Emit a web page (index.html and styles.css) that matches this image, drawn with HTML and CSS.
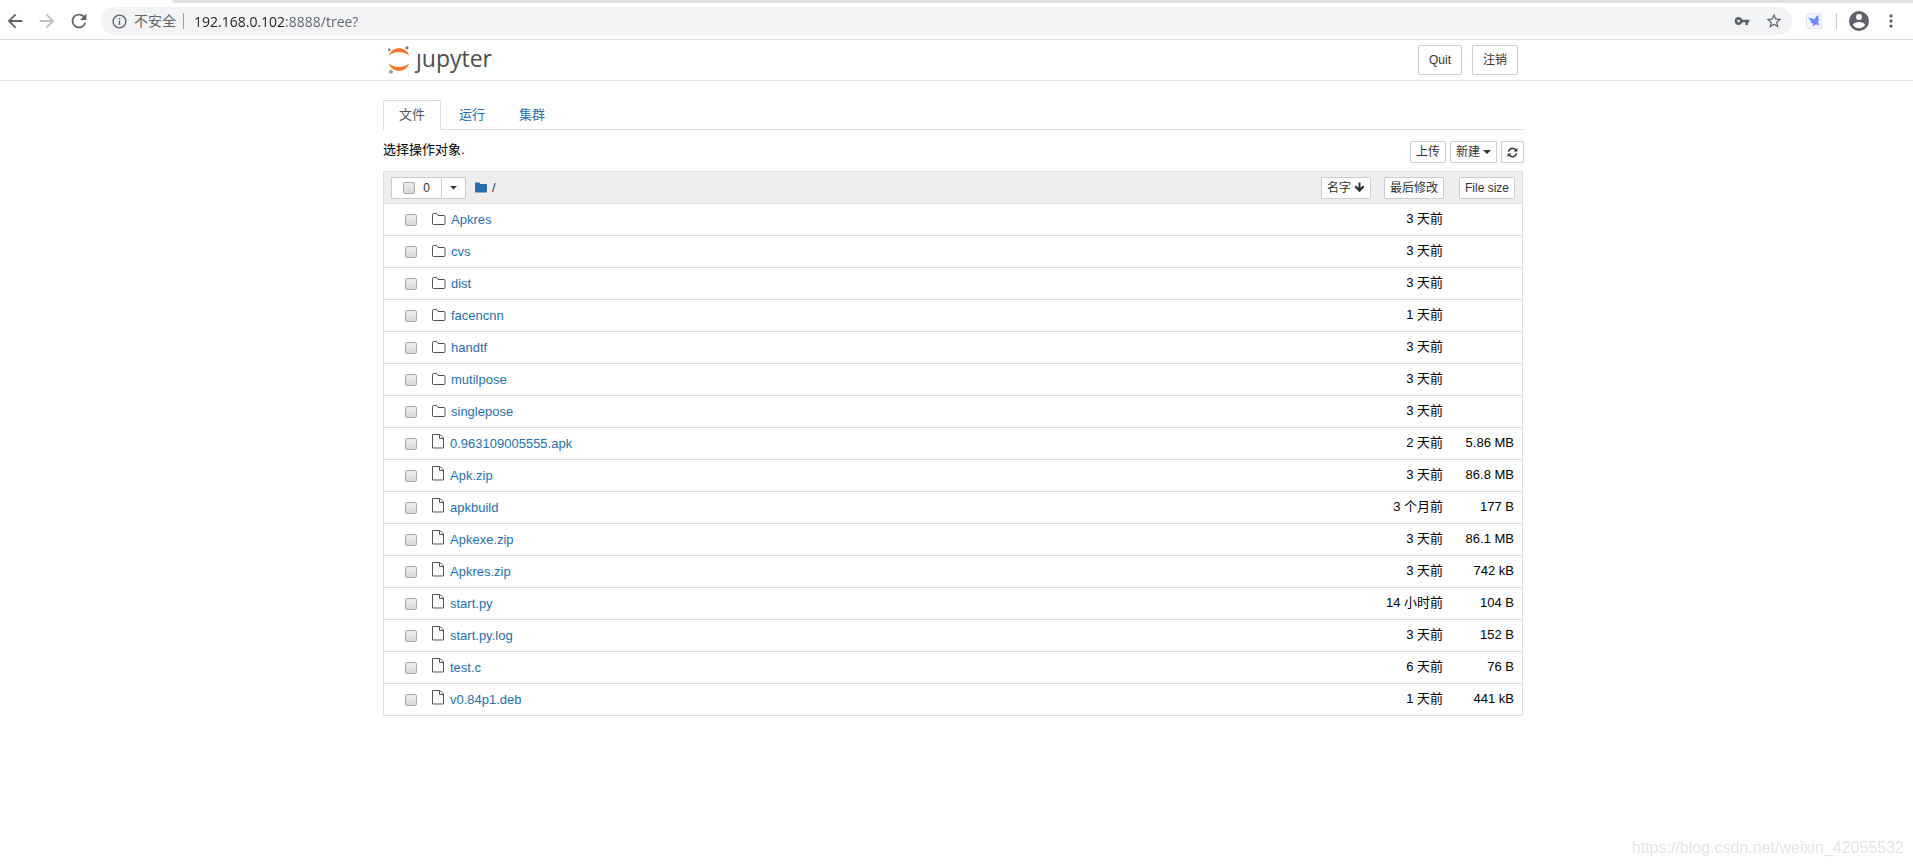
FILE: index.html
```html
<!DOCTYPE html>
<html lang="zh-CN">
<head>
<meta charset="utf-8">
<title>Home Page - Jupyter</title>
<link rel="stylesheet" href="styles.css">
</head>
<body>
<svg class="sprite" aria-hidden="true">
  <symbol id="folder" viewBox="0 0 14 12"><path d="M1.500.5h3l1.500 2h6q1 0 1 1v7q0 1-1 1H1.500q-1 0-1-1v-9q0-1 1-1z" fill="none" stroke="currentColor"/></symbol>
  <symbol id="file" viewBox="0 0 12 15"><path d="M.5.5h7.500l3.500 3.500v10H.5zM7.500.5v4h4" fill="none" stroke="currentColor"/></symbol>
</svg>

<div class="browser">
  <div class="tabstrip"></div>
  <div class="toolbar">
    <div class="nav-buttons">
      <button class="icon-btn" aria-label="后退"><svg viewBox="0 0 24 24"><path d="M20 11H7.830l5.590-5.590L12 4l-8 8 8 8 1.410-1.410L7.830 13H20z"/></svg></button>
      <button class="icon-btn dim" aria-label="前进"><svg viewBox="0 0 24 24"><path d="M4 11h12.170l-5.590-5.590L12 4l8 8-8 8-1.410-1.410L16.170 13H4z"/></svg></button>
      <button class="icon-btn" aria-label="刷新"><svg viewBox="0 0 24 24"><path d="M17.650 6.350A7.950 7.950 0 0 0 12 4a8 8 0 1 0 7.730 10h-2.080A6 6 0 1 1 12 6c1.660 0 3.140.690 4.220 1.780L13 11h7V4z"/></svg></button>
    </div>
    <div class="omnibox">
      <svg class="info" viewBox="0 0 24 24"><path d="M11 17h2v-6h-2zM12 2a10 10 0 1 0 0 20 10 10 0 0 0 0-20zm0 18a8 8 0 1 1 0-16 8 8 0 0 1 0 16zM11 9h2V7h-2z"/></svg>
      <span class="insecure">不安全</span>
      <input class="url" type="text" aria-label="地址" value="192.168.0.102:8888/tree?">
      <button class="icon-btn small" aria-label="密码"><svg viewBox="0 0 24 24"><path d="M12.650 10A6 6 0 0 0 7 6a6 6 0 1 0 5.650 8H17v4h4v-4h2v-4zM7 14a2 2 0 1 1 0-4 2 2 0 0 1 0 4z"/></svg></button>
      <button class="icon-btn star" aria-label="收藏"><svg viewBox="0 0 24 24"><path d="M22 9.240l-7.190-.620L12 2 9.190 8.630 2 9.240l5.460 4.730L5.820 21 12 17.270 18.180 21l-1.630-7.030zM12 15.400l-3.760 2.270 1-4.280-3.320-2.880 4.380-.380L12 6.100l1.710 4.040 4.380.380-3.320 2.880 1 4.280z"/></svg></button>
    </div>
    <div class="extensions">
      <button class="bird" aria-label="扩展程序"><svg viewBox="0 0 16 16"><defs><linearGradient id="wing" x1="0" y1="0" x2="1" y2="1"><stop offset="0" stop-color="#3f9cff"/><stop offset=".55" stop-color="#6b86ff"/><stop offset="1" stop-color="#c26cff"/></linearGradient></defs><path d="M1.500 3.500c2 1.500 4.500 1.500 7 2.500C9.500 3.500 11.500 2 14 1.500c-1 1.500-1.300 3-1 4.500l2 1-2.300.5c0 1.800.5 3.500 1.800 6-1.500-1-3-1.500-4.500-1.500-1.500 1-3 1.800-5 2 1.500-1 2-2 2-3-1.500-.5-3-1-3.500-2.500H6C4 7.500 2 6 1.500 3.500z" fill="url(#wing)"/></svg></button>
      <span class="divider"></span>
      <button class="icon-btn avatar" aria-label="用户"><svg viewBox="0 0 24 24"><path d="M12 2a10 10 0 1 0 0 20 10 10 0 0 0 0-20zm0 3a3 3 0 1 1 0 6 3 3 0 0 1 0-6zm0 14.200a7.200 7.200 0 0 1-6-3.220c.030-1.990 4-3.080 6-3.080s5.970 1.090 6 3.080a7.200 7.200 0 0 1-6 3.220z"/></svg></button>
      <button class="icon-btn" aria-label="菜单"><svg viewBox="0 0 24 24"><circle cx="12" cy="6.500" r="1.800"/><circle cx="12" cy="12" r="1.800"/><circle cx="12" cy="17.500" r="1.800"/></svg></button>
    </div>
  </div>
</div>

<div class="page">
<header class="site-header">
  <div class="container header-row">
    <a class="logo" href="#" aria-label="Jupyter">
      <svg viewBox="0 0 22 28"><path d="M.8 9.800C3.500-.2 18.500-.2 21.200 9.800 15.500 4.800 6.500 4.800.8 9.800zM.8 17.200c2.700 10 17.700 10 20.400 0C15.500 22.200 6.500 22.200.8 17.200z" fill="#f37726"/><circle cx="1.200" cy="3.800" r="1.200" fill="#616262"/><circle cx="19" cy="1.800" r="1.600" fill="#767677"/><circle cx="3" cy="25.800" r="2" fill="#9e9e9e"/></svg>
      <span>ȷupyter</span>
    </a>
    <div class="account">
      <button class="btn">Quit</button>
      <button class="btn">注销</button>
    </div>
  </div>
</header>

<main class="container">
  <nav class="tabs">
    <a class="tab active" href="#">文件</a>
    <a class="tab" href="#">运行</a>
    <a class="tab" href="#">集群</a>
  </nav>

  <div class="actions">
    <p>选择操作对象.</p>
    <div class="action-buttons">
      <button class="btn btn-xs">上传</button>
      <button class="btn btn-xs">新建<span class="caret"></span></button>
      <button class="btn btn-xs refresh" aria-label="刷新列表"><svg viewBox="0 0 12 12"><path d="M1.600 5A4.400 4.400 0 0 1 9.300 3M10.400 7A4.400 4.400 0 0 1 2.700 9" fill="none" stroke="currentColor" stroke-width="1.700"/><path d="M11.300.8v4H7.300zM.7 11.200v-4h4z" fill="currentColor"/></svg></button>
    </div>
  </div>

  <table class="files">
    <thead>
      <tr>
        <th class="name">
          <div class="head-row">
            <div class="select-group">
              <label class="btn btn-xs select-all"><input type="checkbox">0</label>
              <button class="btn btn-xs select-menu" aria-label="选择类型"><span class="caret"></span></button>
            </div>
            <a class="crumb" href="#" aria-label="根目录"><svg viewBox="0 0 12 11"><path d="M1 .5h3q1 0 1 1V2h6q1 0 1 1v6.500q0 1-1 1H1q-1 0-1-1v-8q0-1 1-1z"/></svg></a>
            <span class="slash">/</span>
            <button class="btn btn-xs sort">名字<svg viewBox="0 0 11 11"><path d="M4.500.5h2v5.300L9 3.500l1.500 1.500-5 5.200-5-5.200L2 3.500l2.500 2.300z"/></svg></button>
          </div>
        </th>
        <th class="modified"><button class="btn btn-xs">最后修改</button></th>
        <th class="size"><button class="btn btn-xs">File size</button></th>
      </tr>
    </thead>
    <tbody>
      <tr><td class="name"><div class="item"><input type="checkbox" aria-label="Apkres"><svg class="folder"><use href="#folder"/></svg><a href="#">Apkres</a></div></td><td>3 天前</td><td></td></tr>
      <tr><td class="name"><div class="item"><input type="checkbox" aria-label="cvs"><svg class="folder"><use href="#folder"/></svg><a href="#">cvs</a></div></td><td>3 天前</td><td></td></tr>
      <tr><td class="name"><div class="item"><input type="checkbox" aria-label="dist"><svg class="folder"><use href="#folder"/></svg><a href="#">dist</a></div></td><td>3 天前</td><td></td></tr>
      <tr><td class="name"><div class="item"><input type="checkbox" aria-label="facencnn"><svg class="folder"><use href="#folder"/></svg><a href="#">facencnn</a></div></td><td>1 天前</td><td></td></tr>
      <tr><td class="name"><div class="item"><input type="checkbox" aria-label="handtf"><svg class="folder"><use href="#folder"/></svg><a href="#">handtf</a></div></td><td>3 天前</td><td></td></tr>
      <tr><td class="name"><div class="item"><input type="checkbox" aria-label="mutilpose"><svg class="folder"><use href="#folder"/></svg><a href="#">mutilpose</a></div></td><td>3 天前</td><td></td></tr>
      <tr><td class="name"><div class="item"><input type="checkbox" aria-label="singlepose"><svg class="folder"><use href="#folder"/></svg><a href="#">singlepose</a></div></td><td>3 天前</td><td></td></tr>
      <tr><td class="name"><div class="item"><input type="checkbox" aria-label="0.963109005555.apk"><svg class="file"><use href="#file"/></svg><a href="#">0.963109005555.apk</a></div></td><td>2 天前</td><td>5.86 MB</td></tr>
      <tr><td class="name"><div class="item"><input type="checkbox" aria-label="Apk.zip"><svg class="file"><use href="#file"/></svg><a href="#">Apk.zip</a></div></td><td>3 天前</td><td>86.8 MB</td></tr>
      <tr><td class="name"><div class="item"><input type="checkbox" aria-label="apkbuild"><svg class="file"><use href="#file"/></svg><a href="#">apkbuild</a></div></td><td>3 个月前</td><td>177 B</td></tr>
      <tr><td class="name"><div class="item"><input type="checkbox" aria-label="Apkexe.zip"><svg class="file"><use href="#file"/></svg><a href="#">Apkexe.zip</a></div></td><td>3 天前</td><td>86.1 MB</td></tr>
      <tr><td class="name"><div class="item"><input type="checkbox" aria-label="Apkres.zip"><svg class="file"><use href="#file"/></svg><a href="#">Apkres.zip</a></div></td><td>3 天前</td><td>742 kB</td></tr>
      <tr><td class="name"><div class="item"><input type="checkbox" aria-label="start.py"><svg class="file"><use href="#file"/></svg><a href="#">start.py</a></div></td><td>14 小时前</td><td>104 B</td></tr>
      <tr><td class="name"><div class="item"><input type="checkbox" aria-label="start.py.log"><svg class="file"><use href="#file"/></svg><a href="#">start.py.log</a></div></td><td>3 天前</td><td>152 B</td></tr>
      <tr><td class="name"><div class="item"><input type="checkbox" aria-label="test.c"><svg class="file"><use href="#file"/></svg><a href="#">test.c</a></div></td><td>6 天前</td><td>76 B</td></tr>
      <tr><td class="name"><div class="item"><input type="checkbox" aria-label="v0.84p1.deb"><svg class="file"><use href="#file"/></svg><a href="#">v0.84p1.deb</a></div></td><td>1 天前</td><td>441 kB</td></tr>
    </tbody>
  </table>
</main>
</div>

<div class="watermark">https://blog.csdn.net/weixin_42055532</div>
</body>
</html>
```

FILE: styles.css
```css
* { box-sizing: border-box; }

body {
  margin: 0;
  background: #fff;
  color: #000;
  font: 13px/20px "Liberation Sans", Arial, "Noto Sans CJK SC", sans-serif;
}

a { color: #296eaa; text-decoration: none; }
p { margin: 0; }
svg { display: block; flex: none; }
button, input { font: inherit; margin: 0; }
.sprite { display: none; }

/* Browser frame */
.browser { border-bottom: 1px solid #dadce0; }
.tabstrip { height: 3px; margin-left: 172px; background: #dee1e6; border-bottom-left-radius: 6px; }
.toolbar { display: flex; align-items: center; height: 36px; padding: 0 11px 0 4px; }
.nav-buttons { display: flex; gap: 10px; margin-right: 11px; }
.icon-btn { padding: 0; border: 0; background: none; color: #5f6368; }
.icon-btn svg { width: 22px; height: 22px; fill: currentColor; }
.icon-btn.dim { color: #bdc0c3; }
.icon-btn.small svg { width: 16px; height: 16px; }
.icon-btn.star svg { width: 18px; height: 18px; }
.icon-btn.avatar svg { width: 24px; height: 24px; }
.omnibox {
  display: flex;
  flex: 1;
  align-items: center;
  height: 28px;
  padding: 0 9px 0 10px;
  border-radius: 14px;
  background: #f1f3f4;
}
.info { width: 17px; height: 17px; fill: #5f6368; }
.insecure {
  margin-left: 6px;
  padding-right: 7px;
  border-right: 1px solid #9aa0a6;
  color: #5f6368;
  font-size: 14px;
  line-height: 16px;
}
.url {
  flex: 1;
  min-width: 0;
  height: 24px;
  padding: 0;
  margin-left: 10px;
  border: 0;
  background: linear-gradient(to right, #202124 92px, #5f6368 92px);
  -webkit-background-clip: text;
  background-clip: text;
  -webkit-text-fill-color: transparent;
  font-family: "Open Sans", "Noto Sans", sans-serif;
  font-size: 14px;
}
.star { margin-left: 15px; }
.extensions { display: flex; align-items: center; margin-left: 14px; }
.bird { padding: 0; border: 1px solid #e3e6f5; border-radius: 2px; background: #f3f5fd; }
.bird svg { width: 14px; height: 14px; }
.divider { width: 1px; height: 16px; margin: 0 10px 0 14px; background: #c4c7cb; }
.avatar { margin-right: 9px; }

/* Page header */
.page { padding-right: 7px; }
.container { width: 1140px; max-width: 100%; margin: 0 auto; }
.site-header { margin: 0 -7px 19px 0; padding-right: 7px; border-bottom: 1px solid #e7e7e7; }
.header-row { display: flex; align-items: center; justify-content: space-between; height: 40px; padding: 0 5px; }
.logo { display: flex; align-items: center; gap: 6px; color: #4e4e4e; }
.logo svg { width: 22px; height: 28px; }
.logo span { padding-bottom: 5px; font: 23px/24px "Open Sans", "Noto Sans", sans-serif; }
.account { display: flex; gap: 10px; }
.btn {
  display: flex;
  align-items: center;
  justify-content: center;
  height: 30px;
  padding: 0 10px;
  border: 1px solid #ccc;
  border-radius: 1px;
  background: #fff;
  color: #333;
  font-size: 12px;
  line-height: 18px;
}
.btn-xs { height: 22px; padding: 0 5px; }
.caret { width: 8px; height: 4px; margin-left: 3px; background: #333; clip-path: polygon(0 0, 100% 0, 50% 100%); }

/* Tabs and actions */
.tabs { display: flex; gap: 2px; border-bottom: 1px solid #ddd; }
.tab { height: 29px; padding: 4px 15px; border: 1px solid transparent; border-bottom: 0; }
.tab.active { height: 30px; margin-bottom: -1px; border-color: #ddd; border-radius: 2px 2px 0 0; background: #fff; color: #555; }
.actions { display: flex; justify-content: space-between; margin-right: -1px; padding: 11px 0 8px; }
.actions p { line-height: 18px; }
.action-buttons { display: flex; gap: 4px; }
.action-buttons .btn { padding: 0 5px; }
.refresh svg { width: 11px; height: 11px; }

/* File list */
.files { width: 100%; border: 1px solid #ddd; border-radius: 1px; border-spacing: 0; }
.files th { height: 32px; padding: 0; background: #eee; border-bottom: 1px solid #ddd; font-weight: normal; }
.files td { height: 32px; padding: 0 8px 2px 0; border-bottom: 1px solid #ddd; text-align: right; white-space: nowrap; }
.files tbody tr:last-child td { height: 31px; border-bottom: 0; }
.files td.name { padding: 0; text-align: left; }
.modified { width: 75px; }
.size { width: 71px; }
.files th .btn { white-space: nowrap; }
.modified .btn, .size .btn { margin-left: auto; margin-right: 7px; }
.head-row { display: flex; align-items: center; padding: 0 5px 0 7px; }
.select-group { display: flex; }
.select-all { width: 51px; gap: 8px; }
.select-menu { width: 25px; margin-left: -1px; }
.select-menu .caret { margin-left: 0; }
.crumb { margin-left: 9px; }
.crumb svg { width: 12px; height: 11px; fill: #296eaa; }
.slash { margin-left: 5px; color: #333; }
.sort { gap: 3px; margin-left: auto; }
.sort svg { width: 11px; height: 11px; fill: #333; }
.item { display: flex; align-items: center; padding-left: 21px; }
.folder, .file { margin-left: 15px; color: #555; }
.folder { width: 14px; height: 12px; margin-right: 5px; margin-bottom: 2px; }
.file { width: 12px; height: 15px; margin-right: 6px; margin-bottom: 4px; }
input[type="checkbox"] {
  width: 12px;
  height: 12px;
  border: 1px solid #a9a9a9;
  border-radius: 2px;
  background: linear-gradient(#eee, #d9d9d9);
  appearance: none;
}

.watermark {
  position: fixed;
  right: 9px;
  bottom: 8px;
  color: #e4e4e4;
  font-size: 16px;
  line-height: 20px;
}
```
